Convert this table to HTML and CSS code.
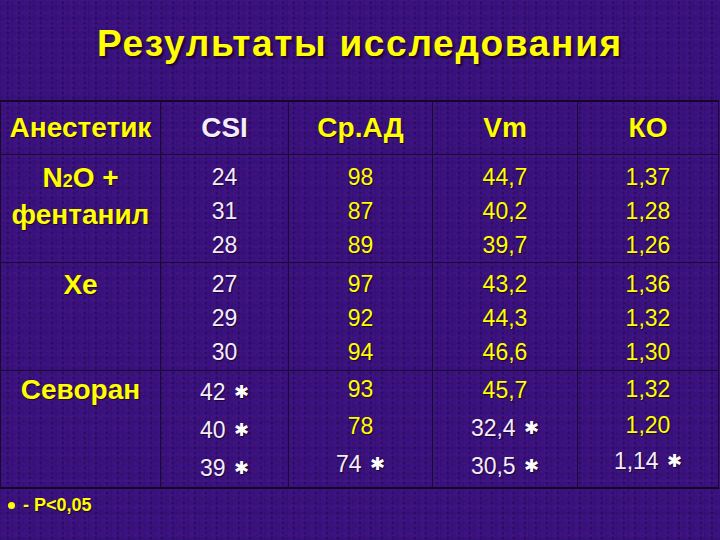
FILE: index.html
```html
<!DOCTYPE html>
<html lang="ru">
<head>
<meta charset="utf-8">
<title>Результаты исследования</title>
<link rel="stylesheet" href="styles.css">
</head>
<body>
<div class="slide">
  <h1 class="title">Результаты исследования</h1>
  <table class="results">
    <colgroup>
      <col class="w1"><col class="w2"><col class="w3"><col class="w4"><col class="w5">
    </colgroup>
    <thead>
      <tr class="head">
        <th class="lbl">Анестетик</th>
        <th class="wh">CSI</th>
        <th>Ср.АД</th>
        <th>Vm</th>
        <th>КО</th>
      </tr>
    </thead>
    <tbody>
      <tr class="r1">
        <td class="lbl"><div class="name">N<span class="sub">2</span>O +<br>фентанил</div></td>
        <td class="wh"><div class="v">24</div><div class="v">31</div><div class="v">28</div></td>
        <td><div class="v">98</div><div class="v">87</div><div class="v">89</div></td>
        <td><div class="v">44,7</div><div class="v">40,2</div><div class="v">39,7</div></td>
        <td><div class="v">1,37</div><div class="v">1,28</div><div class="v">1,26</div></td>
      </tr>
      <tr class="r2">
        <td class="lbl"><div class="name">Xe</div></td>
        <td class="wh"><div class="v">27</div><div class="v">29</div><div class="v">30</div></td>
        <td><div class="v">97</div><div class="v">92</div><div class="v">94</div></td>
        <td><div class="v">43,2</div><div class="v">44,3</div><div class="v">46,6</div></td>
        <td><div class="v">1,36</div><div class="v">1,32</div><div class="v">1,30</div></td>
      </tr>
      <tr class="r3">
        <td class="lbl"><div class="name">Севоран</div></td>
        <td class="wh c3a"><div class="v">42 <span class="ast">✱</span></div><div class="v">40 <span class="ast">✱</span></div><div class="v">39 <span class="ast">✱</span></div></td>
        <td class="c3b"><div class="v">93</div><div class="v">78</div><div class="v wh">74 <span class="ast">✱</span></div></td>
        <td class="c3c"><div class="v">45,7</div><div class="v wh">32,4 <span class="ast">✱</span></div><div class="v wh">30,5 <span class="ast">✱</span></div></td>
        <td class="c3d"><div class="v">1,32</div><div class="v">1,20</div><div class="v wh">1,14 <span class="ast">✱</span></div></td>
      </tr>
    </tbody>
  </table>
  <p class="note"><span class="dot"></span> - P&lt;0,05</p>
</div>
</body>
</html>
```
FILE: styles.css
```css
html, body {
  margin: 0;
  padding: 0;
}
body {
  width: 720px;
  height: 540px;
  overflow: hidden;
  background-color: #3a1280;
  background-image:
    radial-gradient(circle at 30% 40%, rgba(110,20,90,0.25) 0 1px, transparent 2px),
    radial-gradient(circle at 70% 60%, rgba(20,0,60,0.35) 0 1px, transparent 2px),
    repeating-linear-gradient(90deg, rgba(25,0,60,0.10) 0 2px, transparent 2px 5px, rgba(90,40,170,0.07) 5px 7px, transparent 7px 11px),
    repeating-linear-gradient(0deg, rgba(25,0,60,0.08) 0 2px, transparent 2px 6px, rgba(100,40,170,0.06) 6px 8px, transparent 8px 13px);
  background-size: 7px 9px, 11px 5px, auto, auto;
  font-family: "Liberation Sans", Arial, sans-serif;
  color: #ffff00;
}
.slide {
  display: flex;
  flex-direction: column;
}
.title {
  margin: 0;
  height: 100px;
  box-sizing: border-box;
  padding-top: 22px;
  text-align: center;
  font-size: 37px;
  letter-spacing: 1.7px;
  font-weight: bold;
  line-height: 44px;
  color: #ffff00;
  text-shadow: 2px 2px 2px #1a0530;
}
.results {
  width: 718px;
  border-collapse: collapse;
  table-layout: fixed;
  border-top: 2px solid #140628;
  border-bottom: 2px solid #140628;
}
.w1 { width: 160px; }
.w2 { width: 128px; }
.w3 { width: 144px; }
.w4 { width: 145px; }
.w5 { width: 141px; }
.results th,
.results td {
  border: 1px solid #180a30;
  padding: 0;
  text-align: center;
  vertical-align: top;
  color: #ffff00;
}
.results th {
  font-size: 28px;
  font-weight: bold;
  height: 52px;
  vertical-align: middle;
  text-shadow: 1px 1px 1px #1a0530;
}
.results td {
  font-size: 23px;
}
.results .wh,
.results td.wh,
.results th.wh {
  color: #f4ecff;
}
.lbl .name {
  font-weight: bold;
  font-size: 28px;
  line-height: 33px;
  text-shadow: 1px 1px 1px #1a0530;
}
.sub {
  font-size: 18px;
}
.r1 td { height: 101px; padding-top: 5px; }
.r1 .lbl .name { padding-top: 1px; }
.r2 td { height: 103px; padding-top: 4px; }
.r2 .lbl .name { padding-top: 1px; }
.r3 td { height: 116px; padding-top: 0; }
.r3 .lbl .name { padding-top: 2px; }
.v {
  line-height: 34px;
  text-shadow: 1px 1px 1px #1a0530;
}
.r3 td.c3a { padding-top: 2px; height: 114px; }
.c3a .v { line-height: 38px; }
.c3b .v { line-height: 37px; }
.c3c .v { line-height: 38px; }
.c3d .v { line-height: 36px; }
.ast {
  font-family: "DejaVu Sans", sans-serif;
  font-size: 18px;
  color: #ffffff;
  vertical-align: 2px;
  margin-left: 2px;
}
.note {
  margin: 0;
  padding: 6px 0 0 8px;
  font-size: 18px;
  font-weight: bold;
  display: flex;
  align-items: center;
  gap: 8px;
  text-shadow: 1px 1px 1px #1a0530;
}
.dot {
  width: 7px;
  height: 7px;
  border-radius: 50%;
  background: #ffff00;
}
```
